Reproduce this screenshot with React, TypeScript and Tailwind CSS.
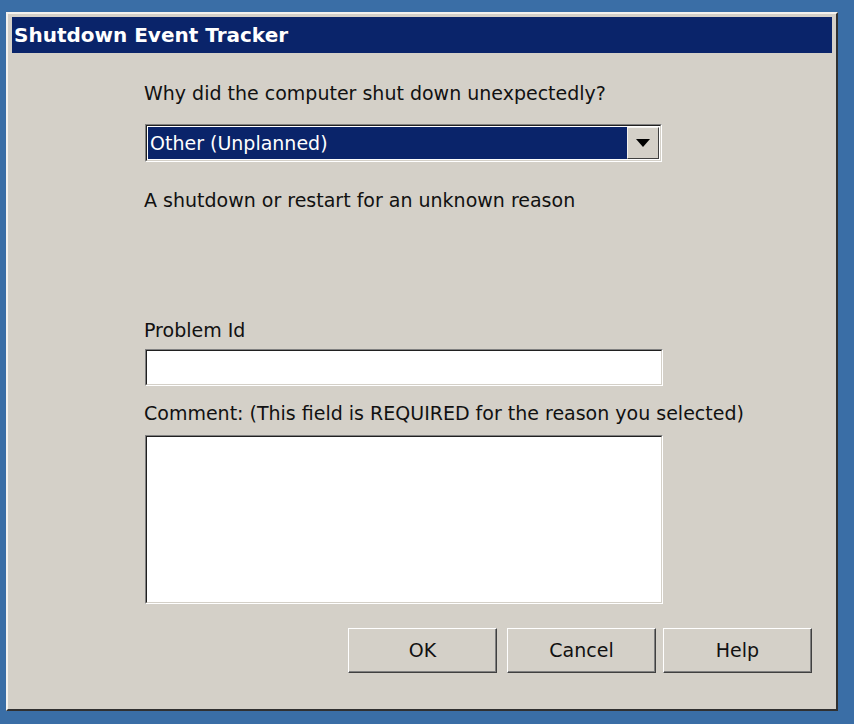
import React from "react";

const font = { fontFamily: '"DejaVu Sans", Verdana, sans-serif' };

function Btn({ label }: { label: string }) {
  return (
    <div className="w-[149px] h-[45px] bg-[#d4d0c8] border border-t-white border-l-white border-r-[#404040] border-b-[#404040] shadow-[inset_-1px_-1px_0_#808080] flex items-center justify-center text-[19px] text-[#111]">
      {label}
    </div>
  );
}

export default function App() {
  return (
    <div className="w-[854px] h-[724px] bg-[#3a6ea6] pt-[12px] pl-[6px] overflow-hidden" style={font}>
      <div className="w-[832px] h-[699px] bg-[#d4d0c8] border-[2px] border-t-[#f4f2ee] border-l-[#f4f2ee] border-r-[#303030] border-b-[#303030] flex flex-col pt-[3px] px-[4px]">
        <div className="h-[36px] bg-[#0a246a] flex items-center pl-[2px] text-white font-bold text-[20px]">
          Shutdown Event Tracker
        </div>
        <div className="flex flex-col pl-[132px] text-[19px] text-[#111] leading-[24px]">
          <div className="mt-[28px] whitespace-nowrap">Why did the computer shut down unexpectedly?</div>
          <div className="ml-[1px] mt-[19px] w-[517px] h-[38px] border border-t-[#808080] border-l-[#808080] border-r-white border-b-white">
            <div className="w-full h-full border border-t-[#202020] border-l-[#202020] border-r-[#d4d0c8] border-b-[#d4d0c8] bg-white flex p-[1px]">
              <div className="flex-1 bg-[#0a246a] text-white flex items-center pl-[2px]">Other (Unplanned)</div>
              <div className="w-[32px] h-full bg-[#d4d0c8] border border-t-[#f4f2ee] border-l-[#f4f2ee] border-r-[#404040] border-b-[#404040] flex items-center justify-center">
                <svg width="14" height="8" viewBox="0 0 14 8"><path d="M0 0 H14 L7 8 Z" fill="#000" /></svg>
              </div>
            </div>
          </div>
          <div className="mt-[26px] whitespace-nowrap">A shutdown or restart for an unknown reason</div>
          <div className="mt-[106px]">Problem Id</div>
          <div className="ml-[1px] mt-[7px] w-[518px] h-[37px] border border-t-[#808080] border-l-[#808080] border-r-white border-b-white">
            <div className="w-full h-full border border-t-[#202020] border-l-[#202020] border-r-[#d4d0c8] border-b-[#d4d0c8] bg-white" />
          </div>
          <div className="mt-[15px] whitespace-nowrap">Comment: (This field is REQUIRED for the reason you selected)</div>
          <div className="ml-[1px] mt-[10px] w-[518px] h-[169px] border border-t-[#808080] border-l-[#808080] border-r-white border-b-white">
            <div className="w-full h-full border border-t-[#202020] border-l-[#202020] border-r-[#d4d0c8] border-b-[#d4d0c8] bg-white" />
          </div>
        </div>
        <div className="flex mt-[24px] pl-[336px] gap-[10px]">
          <Btn label="OK" />
          <div className="flex gap-[7px]">
            <Btn label="Cancel" />
            <Btn label="Help" />
          </div>
        </div>
      </div>
    </div>
  );
}
